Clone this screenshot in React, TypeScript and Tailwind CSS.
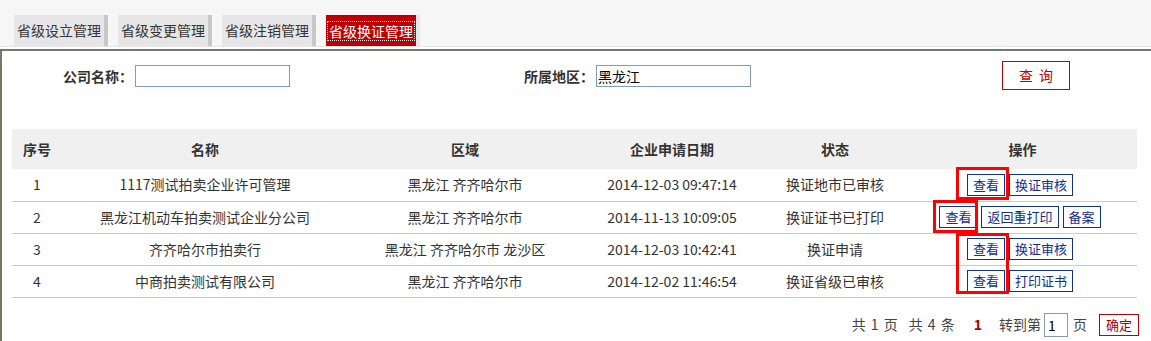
import React from "react";

const rows = [
  { no: "1", name: "1117测试拍卖企业许可管理", area: "黑龙江 齐齐哈尔市", date: "2014-12-03 09:47:14", status: "换证地市已审核", ops: ["查看", "换证审核"] },
  { no: "2", name: "黑龙江机动车拍卖测试企业分公司", area: "黑龙江 齐齐哈尔市", date: "2014-11-13 10:09:05", status: "换证证书已打印", ops: ["查看", "返回重打印", "备案"] },
  { no: "3", name: "齐齐哈尔市拍卖行", area: "黑龙江 齐齐哈尔市 龙沙区", date: "2014-12-03 10:42:41", status: "换证申请", ops: ["查看", "换证审核"] },
  { no: "4", name: "中商拍卖测试有限公司", area: "黑龙江 齐齐哈尔市", date: "2014-12-02 11:46:54", status: "换证省级已审核", ops: ["查看", "打印证书"] },
];

const tabs = ["省级设立管理", "省级变更管理", "省级注销管理", "省级换证管理"];

export default function App() {
  return (
    <div
      className="w-[1151px] h-[341px] bg-white overflow-hidden text-[#333]"
      style={{ fontFamily: '"Noto Sans CJK SC", "Noto Sans", sans-serif' }}
    >
      {/* top bar */}
      <div className="h-[47px] bg-[#f6f6f6] border-b border-[#e6e6e6] pl-[14px] pt-[15px] flex gap-[10px]">
        {tabs.map((t, i) =>
          i === 3 ? (
            <div key={t} className="w-[94px] h-[31px] flex">
              <div className="w-[90px] h-[31px] bg-[#c00000] flex items-center justify-center">
                <span className="text-[14px] leading-[18px] text-white outline-1 outline-dotted outline-[#cfe8f0] px-[1px]">
                  {t}
                </span>
              </div>
              <div className="w-[4px] h-[31px] bg-[#e8e8e8]" />
            </div>
          ) : (
            <div key={t} className="w-[94px] h-[31px] flex">
              <div className="w-[90px] h-[31px] bg-[#e6e6e6] flex items-center justify-center text-[14px] text-[#333]">
                {t}
              </div>
              <div className="w-[4px] h-[31px] bg-[#c8c8c8]" />
            </div>
          )
        )}
      </div>
      <div className="h-[2px]" />
      {/* main */}
      <div className="border-t-2 border-l-2 border-[#77776a] h-[292px]">
        {/* search form */}
        <div className="relative h-[78px]">
          <div className="absolute left-[61px] top-[14px] flex items-center">
            <span className="text-[14px] font-bold text-[#333]">公司名称：</span>
            <input className="ml-[2px] w-[155px] h-[22px] border border-[#7f9db9] bg-white outline-none" />
          </div>
          <div className="absolute left-[522px] top-[14px] flex items-center">
            <span className="text-[14px] font-bold text-[#333]">所属地区：</span>
            <input
              defaultValue="黑龙江"
              className="ml-[2px] w-[155px] h-[22px] border border-[#7f9db9] bg-white outline-none px-[1px] text-[14px] text-black"
            />
          </div>
          <div className="absolute left-[1000px] top-[10px] w-[68px] h-[29px] border border-[#c00000] flex items-center justify-center text-[14px] text-[#c00000] tracking-[6px] pl-[6px]">
            查询
          </div>
        </div>
        {/* table */}
        <div className="relative ml-[10px] w-[1125px]">
          <table className="w-[1125px] table-fixed border-collapse text-[14px]">
            <colgroup>
              <col className="w-[50px]" />
              <col className="w-[286px]" />
              <col className="w-[234px]" />
              <col className="w-[180px]" />
              <col className="w-[146px]" />
              <col className="w-[229px]" />
            </colgroup>
            <thead>
              <tr className="h-[40px] bg-[#f0f0f0] font-bold text-[#333]">
                <th className="font-bold">序号</th>
                <th className="font-bold">名称</th>
                <th className="font-bold">区域</th>
                <th className="font-bold">企业申请日期</th>
                <th className="font-bold">状态</th>
                <th className="font-bold">操作</th>
              </tr>
            </thead>
            <tbody>
              {rows.map((r) => (
                <tr key={r.no} className="h-[32px] border-b border-[#cccccc] text-[#333]">
                  <td className="text-center">{r.no}</td>
                  <td className="text-center">{r.name}</td>
                  <td className="text-center">{r.area}</td>
                  <td className="text-center">{r.date}</td>
                  <td className="text-center">{r.status}</td>
                  <td>
                    <div className="flex justify-center gap-[4px] pr-[5px]">
                      {r.ops.map((o) => (
                        <span
                          key={o}
                          className="h-[22px] px-[5px] border border-[#0d3390] text-[#13308c] text-[13px] leading-[20px] whitespace-nowrap"
                        >
                          {o}
                        </span>
                      ))}
                    </div>
                  </td>
                </tr>
              ))}
            </tbody>
          </table>
          {/* red annotation boxes */}
          <div className="absolute left-[944px] top-[38px] w-[53px] h-[33px] border-[3px] border-[#ff0000]" />
          <div className="absolute left-[921px] top-[71px] w-[45px] h-[33px] border-[3px] border-[#ff0000]" />
          <div className="absolute left-[944px] top-[104px] w-[53px] h-[61px] border-[3px] border-[#ff0000]" />
        </div>
        {/* pagination */}
        <div className="flex items-center justify-end pr-[12px] mt-[15px] text-[14px] text-[#444]">
          <span className="tracking-[1px] whitespace-pre">共 1 页</span>
          <span className="ml-[10px] tracking-[1px] whitespace-pre">共 4 条</span>
          <span className="ml-[18px] font-bold text-[#b00000]">1</span>
          <span className="ml-[17px]">转到第</span>
          <input
            defaultValue="1"
            className="ml-[3px] w-[24px] h-[24px] border border-[#7f9db9] px-[3px] text-[14px] text-black outline-none"
          />
          <span className="ml-[5px]">页</span>
          <span className="ml-[12px] w-[40px] h-[22px] border border-[#c00000] text-[#a00000] flex items-center justify-center text-[13px]">
            确定
          </span>
        </div>
      </div>
    </div>
  );
}
